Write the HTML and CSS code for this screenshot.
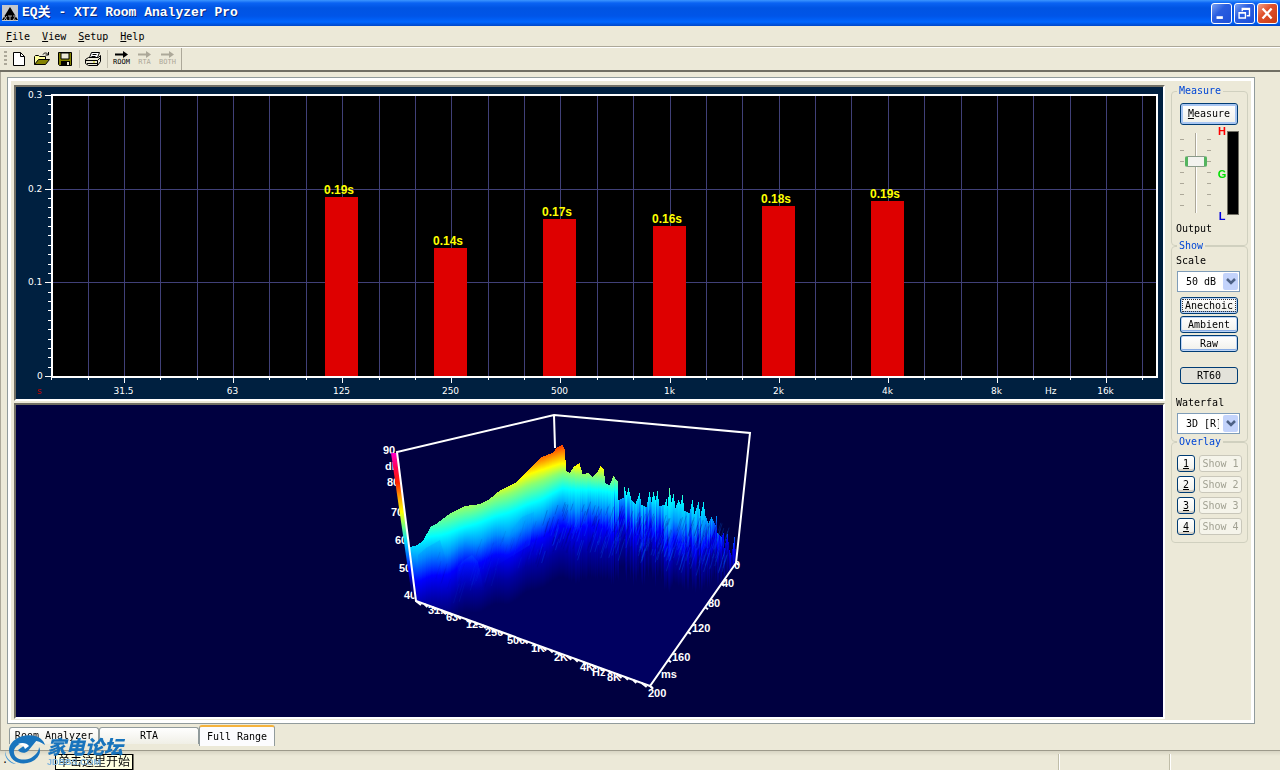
FILE: index.html
```html
<!DOCTYPE html>
<html lang="en">
  <head>
    <meta charset="UTF-8" />
    <meta name="viewport" content="width=device-width, initial-scale=1.0" />
    <title>EQ关 - XTZ Room Analyzer Pro</title>
    <link rel="stylesheet" href="styles.css">
  </head>
  <body>
    <header class="titlebar">
      <svg class="app-icon" viewBox="0 0 16 16" width="16" height="16" aria-hidden="true">
        <rect width="16" height="16" fill="#c3c7cc" />
        <path d="M8 2 L16 15 H0 Z" fill="#000" />
        <path d="M2 11l3 4M5 11l-3 4M6 11h4M8 11v4M11 11h3l-3 4h3" stroke="#aaa" fill="none" />
      </svg>
      <h1>EQ关 - XTZ Room Analyzer Pro</h1>
      <div class="window-buttons">
        <button type="button" aria-label="Minimize">
          <svg viewBox="0 0 21 21"><path d="M5 15h7" stroke="#fff" stroke-width="3" /></svg>
        </button>
        <button type="button" aria-label="Restore">
          <svg viewBox="0 0 21 21"><path d="M8 8V5h8v8h-3M8 6h8M4.500 9.500h7v6h-7zM4.500 10h7" stroke="#fff" stroke-width="1.500" fill="none" /></svg>
        </button>
        <button type="button" class="close" aria-label="Close">
          <svg viewBox="0 0 21 21"><path d="M5 5l10 11M15 5L5 16" stroke="#fff" stroke-width="2.500" /></svg>
        </button>
      </div>
    </header>

    <nav class="menu">
      <button type="button"><u>F</u>ile</button>
      <button type="button"><u>V</u>iew</button>
      <button type="button"><u>S</u>etup</button>
      <button type="button"><u>H</u>elp</button>
    </nav>

    <div class="toolbar">
      <div class="tools">
        <span class="grip"></span>
        <button type="button" aria-label="New">
          <svg viewBox="0 0 16 16"><path d="M2.500 1.500h7l4 4v9h-11z" fill="#fff" stroke="#000" /><path d="M9.500 1.500v4h4" fill="none" stroke="#000" /></svg>
        </button>
        <button type="button" aria-label="Open">
          <svg viewBox="0 0 16 16"><path d="M.5 13.500v-8l1-1h3l1 1h6v3" fill="#ffff9c" stroke="#000" /><path d="M.5 13.500l4-5h11l-4 5z" fill="#848200" stroke="#000" /><path d="M9 3.500c1-2 4-2 5 0M14.500 1v3h-3" fill="none" stroke="#000" /></svg>
        </button>
        <button type="button" aria-label="Save">
          <svg viewBox="0 0 16 16"><path d="M1.500 1.500h13v13h-12l-1-1z" fill="#848200" stroke="#000" /><path d="M4 2h8v6H4z" fill="#ece9d8" stroke="#000" /><path d="M4 10h9v4H4z" fill="#000" /><path d="M10 11h2v3h-2z" fill="#ece9d8" /></svg>
        </button>
        <span class="separator"></span>
        <button type="button" aria-label="Print">
          <svg viewBox="0 0 16 16"><path d="M4.500 6.500l2-5h8l-2 5" fill="#fff" stroke="#000" /><path d="M7.500 3.500h4M6.500 5.500h4" stroke="#000" /><path d="M.5 8.500l3-2h10l2-2v6l-3 4h-9l-3-2z" fill="#ece9d8" stroke="#000" /><path d="M.5 9.500h12l3-3M2 12.500h10M12.500 9.500v5" fill="none" stroke="#000" /><path d="M8 11h2" stroke="#cc0" /></svg>
        </button>
        <span class="separator"></span>
        <button type="button" class="measure-tool">
          <svg viewBox="0 0 13 7"><path d="M0 3.500h9" stroke="currentColor" stroke-width="2" /><path d="M8 0l5 3.500L8 7z" fill="currentColor" /></svg>
          <span>ROOM</span>
        </button>
        <button type="button" class="measure-tool" disabled>
          <svg viewBox="0 0 13 7"><path d="M0 3.500h9" stroke="currentColor" stroke-width="2" /><path d="M8 0l5 3.500L8 7z" fill="currentColor" /></svg>
          <span>RTA</span>
        </button>
        <button type="button" class="measure-tool" disabled>
          <svg viewBox="0 0 13 7"><path d="M0 3.500h9" stroke="currentColor" stroke-width="2" /><path d="M8 0l5 3.500L8 7z" fill="currentColor" /></svg>
          <span>BOTH</span>
        </button>
      </div>
    </div>

    <main class="workspace">
      <div class="panel">
        <div class="charts">
          <div class="chart reverb">
            <svg id="reverb" viewBox="16 87 1147 312" role="img" aria-label="RT60 reverberation time">
              <rect x="52" y="96" width="1105" height="280" fill="#000" />
              <g id="grid"></g>
              <rect x="52" y="95" width="1105" height="282" fill="none" stroke="#fff" stroke-width="2" />
              <text x="28" y="98">0.3</text>
              <text x="28" y="192">0.2</text>
              <text x="28" y="285">0.1</text>
              <text x="37" y="379">0</text>
              <text x="37" y="394" class="unit">s</text>
              <text x="1045" y="394">Hz</text>
            </svg>
          </div>

          <div class="chart waterfall">
            <svg viewBox="16 405 1147 312" class="scale-text">
              <text x="383" y="454">90</text>
              <text x="385" y="470">dB</text>
              <text x="387" y="486">80</text>
              <text x="391" y="516">70</text>
              <text x="395" y="544">60</text>
              <text x="399" y="572">50</text>
              <text x="404" y="599">40</text>
              <text x="428" y="614">31.5</text>
              <text x="446" y="621">63</text>
              <text x="466" y="628">125</text>
              <text x="485" y="636">250</text>
              <text x="507" y="644">500</text>
              <text x="531" y="652">1K</text>
              <text x="554" y="661">2K</text>
              <text x="580" y="671">4K</text>
              <text x="592" y="676">Hz</text>
              <text x="607" y="681">8K</text>
              <text x="734" y="569">0</text>
              <text x="722" y="587">40</text>
              <text x="708" y="607">80</text>
              <text x="692" y="632">120</text>
              <text x="672" y="661">160</text>
              <text x="661" y="678">ms</text>
              <text x="648" y="697">200</text>
            </svg>
            <canvas id="surface" width="1147" height="312"></canvas>
            <svg viewBox="16 405 1147 312" aria-hidden="true">
              <g fill="none" stroke="#fff" stroke-width="2">
                <path d="M416 601L397 452L554 415L750 433L736 563L650 686Z" />
                <path d="M554 415l1 33" />
                <path id="ticks" />
              </g>
            </svg>
          </div>
        </div>

        <aside class="controls">
          <fieldset class="group-measure">
            <legend>Measure</legend>
            <button type="button" class="btn btn-measure"><u>M</u>easure</button>
            <div class="levels">
              <div class="slider">
                <input type="range" id="output" min="0" max="100" value="66" />
              </div>
              <div class="marks">
                <span class="high">H</span>
                <span class="good">G</span>
                <span class="low">L</span>
              </div>
              <div class="meter"></div>
            </div>
            <label for="output">Output</label>
          </fieldset>

          <fieldset class="group-show">
            <legend>Show</legend>
            <label for="scale">Scale</label>
            <div class="select">
              <select id="scale"><option>50 dB</option></select>
              <svg viewBox="0 0 15 17" aria-hidden="true"><rect width="15" height="17" rx="2" fill="#c3d3fb" /><path d="M4 6l4 4l4-4" fill="none" stroke="#4d6185" stroke-width="2.500" /></svg>
            </div>
            <div class="modes">
              <button type="button" class="btn focused">Anechoic</button>
              <button type="button" class="btn">Ambient</button>
              <button type="button" class="btn">Raw</button>
              <button type="button" class="btn pressed">RT60</button>
            </div>
            <label for="waterfall">Waterfal</label>
            <div class="select">
              <select id="waterfall"><option>3D [R]</option></select>
              <svg viewBox="0 0 15 17" aria-hidden="true"><rect width="15" height="17" rx="2" fill="#c3d3fb" /><path d="M4 6l4 4l4-4" fill="none" stroke="#4d6185" stroke-width="2.500" /></svg>
            </div>
          </fieldset>

          <fieldset class="group-overlay">
            <legend>Overlay</legend>
            <div class="overlays">
              <button type="button" class="btn plain"><u>1</u></button>
              <button type="button" class="btn" disabled>Show 1</button>
              <button type="button" class="btn plain"><u>2</u></button>
              <button type="button" class="btn" disabled>Show 2</button>
              <button type="button" class="btn plain"><u>3</u></button>
              <button type="button" class="btn" disabled>Show 3</button>
              <button type="button" class="btn plain"><u>4</u></button>
              <button type="button" class="btn" disabled>Show 4</button>
            </div>
          </fieldset>
        </aside>
      </div>

      <div class="tabs" role="tablist">
        <button type="button" role="tab">Room Analyzer</button>
        <button type="button" role="tab" class="wide">RTA</button>
        <button type="button" role="tab" class="active" aria-selected="true">Full Range</button>
      </div>
    </main>

    <footer class="statusbar">
      <span class="message">.</span>
      <span class="cell"></span>
      <span class="cell"></span>
      <div class="tooltip" role="tooltip">单击这里开始</div>
      <div class="watermark">
        <svg viewBox="0 0 42 32" width="42" height="32" aria-hidden="true">
          <path d="M4 16C5 7 18 0 30 3C35 4 39 8 40 12C35 8 30 7 25 8C15 9 8 14 9 20C10 27 19 28 26 25C31 22 34 18 34 14C37 19 33 26 26 29C16 33 4 29 4 16Z" fill="#1874bd" />
          <path d="M8 12C12 6 24 3 32 7L23 18C20 21 15 20 13 17L20 12C17 10 12 10 8 12Z" fill="#1874bd" />
          <path d="M13 11C17 9 22 10 24 13L20 16C19 13 17 12 13 11Z" fill="#fff" />
          <path d="M0 17C0 24 5 29 11 31C5 31-1 25 0 17Z" fill="#3c94d6" />
        </svg>
        <div class="watermark-text">
          <strong>家电论坛</strong>
          <span>JDBBS.COM</span>
        </div>
      </div>
    </footer>

    <script src="charts.js"></script>
  </body>
</html>
```

FILE: charts.js
```js
const SVG = "http://www.w3.org/2000/svg";

function add(parent, name, attrs, text) {
  const el = document.createElementNS(SVG, name);
  for (const key in attrs) el.setAttribute(key, attrs[key]);
  if (text) el.textContent = text;
  parent.appendChild(el);
}

// Reverberation chart: third-octave grid
const grid = document.getElementById("grid");
const reverb = document.getElementById("reverb");
const labels = ["31.5", "63", "125", "250", "500", "1k", "2k", "4k", "8k", "16k"];
const bandX = (i) => Math.round(124 + i * 36.37);

for (let i = -2; i <= 28; i++) {
  const x = bandX(i) + 0.5;
  const octave = i >= 0 && i % 3 === 0;
  if (i > -2) add(grid, "path", { d: `M${x} 96V376`, class: "gridline" });
  add(grid, "path", { d: `M${x} 378v${octave ? 5 : 2}`, class: "tick" });
  if (octave) {
    add(reverb, "text", { x: x - 1, y: 394, "text-anchor": "middle" }, labels[i / 3]);
  }
}
for (let i = 0; i <= 30; i++) {
  const y = Math.round(376 - i * 9.37) + 0.5;
  const major = i % 10 === 0;
  if (major && i > 0 && i < 30) add(grid, "path", { d: `M52 ${y}H1157`, class: "gridline" });
  add(grid, "path", { d: `M${major ? 45 : 48} ${y}H52`, class: "tick" });
}

const bars = [
  { band: 6, top: 197, label: "0.19s" },
  { band: 9, top: 248, label: "0.14s" },
  { band: 12, top: 219, label: "0.17s" },
  { band: 15, top: 226, label: "0.16s" },
  { band: 18, top: 206, label: "0.18s" },
  { band: 21, top: 201, label: "0.19s" },
];
bars.forEach(({ band, top, label }) => {
  const x = bandX(band);
  add(reverb, "rect", { x: x - 17, y: top, width: 33, height: 376 - top, fill: "#de0000" });
  add(reverb, "text", { x: x - 3, y: top - 3, class: "value" }, label);
});

// Waterfall: ridge outline, then one colour column per x
const ctx = document.getElementById("surface").getContext("2d");
ctx.translate(-16, -405);

const ridge = [
  [409, 547], [417, 545], [423, 540], [430, 527], [437, 523], [450, 513], [464, 506],
  [480, 504], [489, 499], [500, 490], [516, 482], [528, 470], [541, 457], [552, 453],
  [557, 447], [562, 445], [564, 449], [566, 471], [569, 473], [573, 467], [579, 463],
  [582, 474], [588, 473], [592, 477], [597, 472], [600, 466], [603, 469], [605, 483],
  [609, 485], [613, 476], [617, 481], [618, 500], [623, 498], [624, 487], [626, 495],
  [628, 488], [631, 500], [635, 504], [639, 493], [641, 505], [646, 507], [649, 492],
  [651, 502], [653, 492], [655, 500], [657, 491], [659, 506], [664, 505], [666, 499],
  [667, 506], [669, 488], [671, 502], [673, 494], [675, 508], [678, 500], [680, 504],
  [682, 495], [684, 511], [689, 513], [692, 500], [694, 514], [698, 502], [700, 516],
  [703, 502], [705, 516], [708, 523], [711, 517], [715, 525], [716, 516], [717, 533],
  [721, 537], [723, 533], [724, 548], [727, 534], [729, 550], [731, 555], [734, 537],
  [736, 560],
];
const colours = ["#ff4b00", "#ffff00", "#8cff70", "#00ffff", "#0090ff", "#0000ff", "#0000a0", "#000060"];
const levels = [
  [408, 500, 510, 522, 540, 558, 580, 605, 630],
  [440, 490, 502, 514, 535, 553, 574, 600, 622],
  [470, 485, 497, 508, 526, 546, 566, 592, 615],
  [540, 455, 470, 481, 500, 519, 538, 562, 588],
  [562, 447, 464, 473, 489, 508, 528, 554, 580],
  [600, 452, 467, 476, 490, 506, 524, 550, 576],
  [640, 455, 470, 480, 495, 514, 532, 554, 578],
  [700, 470, 480, 487, 500, 524, 543, 563, 584],
  [736, 480, 490, 497, 508, 526, 542, 562, 582],
];

function lookup(table, x) {
  let i = 1;
  while (i < table.length - 1 && table[i][0] < x) i++;
  const a = table[i - 1];
  const b = table[i];
  const t = (x - a[0]) / (b[0] - a[0]);
  return a.slice(1).map((v, k) => v + (b[k + 1] - v) * t);
}

let seed = 7;
function random() {
  seed = (seed * 16807) % 2147483647;
  return seed / 2147483647;
}

// floor of the 3D box
ctx.fillStyle = "#000060";
ctx.beginPath();
ctx.moveTo(416, 601);
ctx.lineTo(410, 548);
ctx.lineTo(562, 500);
ctx.lineTo(736, 563);
ctx.lineTo(650, 686);
ctx.closePath();
ctx.fill();

ctx.save();
ctx.beginPath();
ctx.moveTo(408, 546);
ctx.lineTo(408, 430);
ctx.lineTo(738, 430);
ctx.lineTo(736, 563);
ctx.lineTo(650, 686);
ctx.lineTo(416, 601);
ctx.closePath();
ctx.clip();

for (let x = 409; x < 736; x++) {
  const top = Math.round(lookup(ridge, x)[0]);
  const wave = Math.sin(x / 5) * 2 + Math.sin(x / 13) * 2;
  const shift = wave + (random() - 0.5) * (x > 610 ? 18 : x > 565 ? 6 : 1);
  const stops = lookup(levels, x);
  const first = stops[0] - 10;
  const last = stops[stops.length - 1] + 20;
  const fill = ctx.createLinearGradient(0, first, 0, last);
  stops.forEach((y, k) => {
    fill.addColorStop((y + shift * (k > 3 ? 1 : 0.2) - first) / (last - first), colours[k]);
  });
  ctx.fillStyle = fill;
  ctx.fillRect(x, top, 1, last - top);
}

// slanted decay streaks, denser towards the high frequencies
for (let i = 0; i < 420; i++) {
  const x = 430 + Math.sqrt(random()) * 300;
  const stops = lookup(levels, x);
  const y = stops[4] - 6 + random() * 42;
  const length = 6 + random() * 16;
  const strength = x < 540 ? 0.08 : 0.22;
  ctx.strokeStyle = random() > 0.5 ? `rgba(0, 120, 255, ${strength})` : `rgba(0, 0, 110, ${strength})`;
  ctx.beginPath();
  ctx.moveTo(x, y);
  ctx.lineTo(x - length * 0.3, y + length);
  ctx.stroke();
}

// lower ridges on the bass side
const folds = [
  [[458, 566], [464, 560], [472, 555], [478, 562], [484, 590], [456, 590]],
  [[488, 548], [498, 542], [510, 537], [513, 528], [522, 517], [534, 512], [530, 545], [486, 572]],
  [[418, 555], [426, 548], [440, 540], [446, 560], [430, 590], [420, 590]],
];
folds.forEach((points) => {
  const y = points[0][1];
  const fill = ctx.createLinearGradient(0, y - 20, 0, y + 28);
  fill.addColorStop(0, "rgba(0, 160, 255, 0.28)");
  fill.addColorStop(1, "rgba(0, 0, 255, 0)");
  ctx.fillStyle = fill;
  ctx.beginPath();
  points.forEach(([px, py]) => ctx.lineTo(px, py));
  ctx.fill();
});
ctx.restore();

// level colour strip beside the dB axis
const strip = ctx.createLinearGradient(0, 453, 0, 600);
["#ff00c8", "#ff0050", "#ff2000", "#ffa000", "#ffff00", "#70ff80", "#00d8ff", "#0070ff", "#0000ff", "#000080", "#000050"]
  .forEach((c, i, all) => strip.addColorStop(i / (all.length - 1), c));
ctx.fillStyle = strip;
ctx.beginPath();
ctx.moveTo(391, 453);
ctx.lineTo(397, 453);
ctx.lineTo(416, 601);
ctx.lineTo(411, 590);
ctx.closePath();
ctx.fill();

// ticks along the frequency and time axes
let ticks = "";
for (let i = 0; i <= 28; i++) {
  const t = i / 28;
  ticks += `M${416 + 234 * t} ${601 + 85 * t}l${i % 3 ? "3 3" : "5 4"}`;
}
[0, 0.17, 0.36, 0.56, 0.79, 1].forEach((t) => {
  ticks += `M${736 - 86 * t} ${563 + 123 * t}l3 2`;
});
document.getElementById("ticks").setAttribute("d", ticks);
```

FILE: styles.css
```css
* {
  box-sizing: border-box;
}

body {
  display: flex;
  flex-direction: column;
  min-height: 100vh;
  margin: 0;
  background-color: #ece9d8;
  color: #000;
  font-family: "DejaVu Sans Mono", "Noto Sans CJK SC", monospace;
  font-size: 10px;
  line-height: 12px;
}

button,
select {
  margin: 0;
  padding: 0;
  font: inherit;
  color: inherit;
}

/* Title bar */
.titlebar {
  display: flex;
  align-items: center;
  height: 26px;
  padding: 0 2px;
  background: linear-gradient(#3c96ff 0, #0a63f3 3px, #0054e3 8px, #0055e8 16px, #0066ff 22px, #0047c8 26px);
}

.titlebar h1 {
  flex: 1;
  margin: 0 4px;
  color: #fff;
  font-family: "Liberation Mono", "Noto Sans CJK SC", monospace;
  font-size: 13px;
  line-height: 20px;
  text-shadow: 1px 1px #0a2a80;
}

.window-buttons {
  display: flex;
  gap: 2px;
}

.window-buttons button {
  width: 21px;
  height: 21px;
  border: 1px solid #fff;
  border-radius: 3px;
  background: linear-gradient(135deg, #7ba2f2, #2a5ee0 40%, #1d50d8);
}

.window-buttons .close {
  background: linear-gradient(135deg, #f0a088, #e0512c 40%, #c83c14);
}

.window-buttons svg {
  display: block;
  width: 100%;
}

/* Menu and toolbar */
.menu {
  display: flex;
  gap: 12px;
  height: 22px;
  padding: 0 6px;
  border-bottom: 1px solid #fff;
  box-shadow: inset 0 -1px #aca899;
}

.menu button {
  border: 0;
  background: none;
}

.toolbar {
  height: 24px;
  border-bottom: 2px solid #716f64;
}

.tools {
  display: flex;
  align-items: center;
  width: 182px;
  height: 22px;
  padding-left: 4px;
  border-right: 1px solid #aca899;
}

.tools button {
  width: 23px;
  height: 20px;
  padding: 0 3px;
  border: 0;
  background: none;
}

.tools button svg {
  display: block;
  width: 16px;
  height: 16px;
}

.grip {
  width: 3px;
  height: 16px;
  margin-right: 1px;
  background: repeating-linear-gradient(#aca899 0, #aca899 2px, #ece9d8 2px, #ece9d8 4px);
}

.separator {
  width: 1px;
  height: 18px;
  margin: 0 2px;
  background-color: #c5c2b2;
}

.tools .measure-tool {
  display: flex;
  flex-direction: column;
  align-items: center;
  padding: 2px 0 0;
  font-size: 7px;
  line-height: 8px;
}

.tools .measure-tool svg {
  width: 13px;
  height: 7px;
  flex: none;
}

.measure-tool:disabled {
  color: #aca899;
}

/* Work area */
.workspace {
  flex: 1;
  padding: 5px 25px 0 6px;
  border-left: 1px solid #aca899;
  border-bottom: 1px solid #9d9a8b;
}

.panel {
  display: grid;
  grid-template-columns: 1fr 77px;
  gap: 6px;
  padding: 7px 6px 4px;
  border: 1px solid #919b9c;
  outline: 3px solid #fff;
  outline-offset: -4px;
}

.charts {
  display: grid;
  gap: 2px;
  align-content: start;
}

.chart {
  display: grid;
  border: 2px solid;
  border-color: #716f64 #fff #fff #716f64;
}

.chart svg,
.chart canvas {
  display: block;
  grid-area: 1 / 1;
  width: 100%;
  fill: #fff;
}

.reverb {
  background-color: #002040;
  font-family: "DejaVu Sans", Verdana, sans-serif;
  font-size: 9px;
}

.reverb .unit {
  fill: #c00000;
}

.reverb .value {
  font-family: "Liberation Sans", Arial, sans-serif;
  font-size: 12px;
  font-weight: bold;
  text-anchor: middle;
  fill: #ffff00;
}

.gridline {
  stroke: #404078;
}

.tick {
  stroke: #fff;
}

.waterfall {
  background-color: #000040;
}

.scale-text {
  font-family: "Liberation Sans", Arial, sans-serif;
  font-size: 11px;
  font-weight: bold;
}

/* Side controls */
fieldset {
  min-width: 0;
  margin: 0;
  padding: 0 4px;
  border: 1px solid #d0d0bf;
  border-radius: 4px;
}

legend {
  margin-left: 1px;
  padding: 0 2px;
  background-color: #ece9d8;
  color: #0046d5;
}

label {
  display: block;
}

/* the groups share an edge, so each one runs down to the next border */
.group-measure {
  height: 161px;
  margin-bottom: -6px;
}

.group-show {
  height: 202px;
  margin-bottom: -6px;
}

.group-overlay {
  height: 107px;
}

.btn {
  display: block;
  height: 17px;
  border: 1px solid #003c74;
  border-radius: 3px;
  background: linear-gradient(#fff, #f0f0ea);
  box-shadow: inset 0 0 0 1px #bcd4f6, inset 0 -2px #89ade4;
  line-height: 14px;
  white-space: nowrap;
}

.btn-measure {
  width: 58px;
  height: 22px;
  margin: 6px 4px 0;
  box-shadow: inset 0 0 0 2px #a8c6f2;
  line-height: 18px;
}

.levels {
  display: flex;
  height: 84px;
  margin: 6px 0 8px 4px;
}

.slider {
  display: flex;
  justify-content: center;
  width: 31px;
  padding: 2px 0;
  background-image:
    repeating-linear-gradient(transparent 0, transparent 10px, #aca899 10px, #aca899 11px),
    repeating-linear-gradient(transparent 0, transparent 10px, #aca899 10px, #aca899 11px);
  background-position: 0 -2px, 27px -2px;
  background-repeat: no-repeat;
  background-size: 4px 84px;
}

.slider input {
  width: 22px;
  height: 80px;
  margin: 0;
  appearance: none;
  background: linear-gradient(90deg, #aca899 50%, #fff 50%) center / 2px 100% no-repeat;
  direction: rtl;
  writing-mode: vertical-lr;
}

.slider input::-webkit-slider-thumb {
  width: 22px;
  height: 11px;
  appearance: none;
  border: 1px solid #8a9a8a;
  border-right: 3px solid #55b45f;
  border-left: 3px solid #55b45f;
  border-radius: 2px;
  background-color: #f3f3ef;
}

.marks {
  display: flex;
  flex-direction: column;
  justify-content: space-between;
  width: 10px;
  margin: -6px 0 -7px 6px;
  font-family: "Liberation Sans", Arial, sans-serif;
  font-size: 11px;
  font-weight: bold;
  text-align: center;
}

.high {
  color: #ff0000;
}

.good {
  color: #00e000;
}

.low {
  color: #0000e0;
}

.meter {
  width: 12px;
  background-color: #000;
  border: 1px solid #716f64;
}

.group-show label {
  margin: 3px 0 4px;
}

.select {
  position: relative;
  width: 63px;
  margin-left: 1px;
}

.select select {
  display: block;
  width: 63px;
  height: 21px;
  padding: 0 20px 0 8px;
  border: 1px solid #7f9db9;
  border-radius: 0;
  background-color: #fff;
  appearance: none;
  overflow: hidden;
}

.select svg {
  position: absolute;
  top: 2px;
  right: 2px;
  width: 15px;
  height: 17px;
  pointer-events: none;
}

.modes {
  display: grid;
  gap: 2px;
  width: 58px;
  margin: 5px 4px 13px;
}

.modes .focused {
  outline: 1px dotted #333;
  outline-offset: -3px;
}

.modes .pressed {
  margin-top: 13px;
  background: #e3e2da;
  box-shadow: none;
}

.overlays {
  display: grid;
  grid-template-columns: 18px 43px;
  gap: 4px;
  margin: 7px 0 0 1px;
}

.btn.plain {
  box-shadow: inset 0 -2px #d6d0c5;
}

.btn:disabled {
  border-color: #c9c7ba;
  background: #f5f4ea;
  box-shadow: none;
  color: #a1a192;
}

/* Tabs */
.tabs {
  display: flex;
  align-items: flex-start;
  height: 26px;
  padding-left: 2px;
}

.tabs button {
  width: 90px;
  height: 17px;
  margin-top: 3px;
  border: 1px solid #919b9c;
  border-bottom: 0;
  border-radius: 3px 3px 0 0;
  background: linear-gradient(#fff, #f0efe6);
}

.tabs .wide {
  width: 100px;
}

.tabs .active {
  width: 76px;
  height: 21px;
  margin-top: 1px;
  border-top: 2px solid #f5b23c;
  background: #fcfcfe;
}

/* Status bar */
.statusbar {
  position: relative;
  display: flex;
  height: 19px;
  padding-top: 3px;
  background: linear-gradient(#d8d5c4, #ece9d8 5px);
}

.message {
  flex: 1;
  padding-left: 2px;
}

.cell {
  width: 111px;
  border-left: 1px solid #c0bda8;
  box-shadow: inset 1px 0 #fff;
}

.tooltip {
  position: absolute;
  bottom: 0;
  left: 55px;
  width: 78px;
  height: 16px;
  border: 1px solid #000;
  background-color: #ffffe1;
  box-shadow: 1px 0 #77756a;
  font-size: 12px;
  line-height: 14px;
  text-align: center;
}

.watermark {
  position: absolute;
  bottom: 5px;
  left: 5px;
  display: flex;
  align-items: flex-end;
  color: #1874bd;
  font-family: "Liberation Sans", "Noto Sans CJK SC", sans-serif;
}

.watermark-text {
  display: flex;
  flex-direction: column;
}

.watermark strong {
  font-size: 19px;
  font-weight: 900;
  font-style: italic;
  line-height: 22px;
}

.watermark span {
  color: #7fb4de;
  font-size: 9px;
  font-weight: bold;
  line-height: 6px;
}
```
